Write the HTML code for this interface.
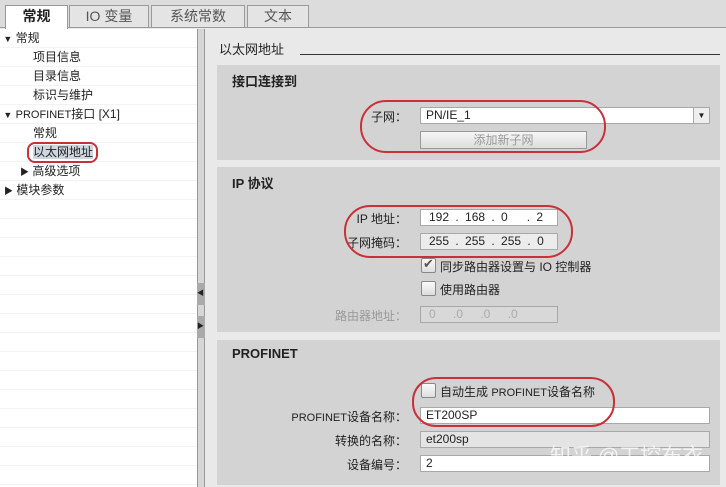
<!DOCTYPE html><html><head><meta charset="utf-8"><style>
*{margin:0;padding:0;box-sizing:border-box}
body{width:726px;height:487px;overflow:hidden;background:#e9e9e9;font-family:"Liberation Sans","Noto Sans CJK SC",sans-serif;font-size:12px;color:#222;position:relative}
.a{position:absolute}
.tab{position:absolute;top:5px;height:22px;border:1px solid #9a9a9a;border-bottom:none;background:#e4e4e4;font-size:14px;color:#555;text-align:center;line-height:21px}
.row{position:absolute;left:0;width:197px;height:19px;border-bottom:1px solid #f3f3f3;line-height:18px;font-size:12px}
.sec{position:absolute;left:217px;width:503px;background:#d3d3d3}
.h{position:absolute;left:15px;font-weight:bold;font-size:13px}
.lbl{position:absolute;text-align:right;width:120px;font-size:12px}
.box{position:absolute;background:#fff;border:1px solid #a8a8a8;height:17px;line-height:15px;padding-left:5px;font-size:12px}
.cb{position:absolute;width:15px;height:15px;border:1px solid #888;background:linear-gradient(#fafafa,#ddd);border-radius:2px}
.ell{position:absolute;border:2px solid #c8303a}
</style></head><body>
<div class="a" style="left:0;top:0;width:726px;height:28px;background:#dcdcdc;border-bottom:1px solid #9a9a9a"></div>
<div class="tab" style="left:5px;width:63px;background:#fff;font-weight:bold;color:#222;height:24px">常规</div>
<div class="tab" style="left:69px;width:80px">IO 变量</div>
<div class="tab" style="left:151px;width:94px">系统常数</div>
<div class="tab" style="left:247px;width:62px">文本</div>
<div class="a" style="left:0;top:29px;width:197px;height:458px;background:#fff"></div>
<div class="row" style="top:29px">&nbsp;<span style="font-size:9px">▼</span> 常规</div>
<div class="row" style="top:48px;padding-left:33px">项目信息</div>
<div class="row" style="top:67px;padding-left:33px">目录信息</div>
<div class="row" style="top:86px;padding-left:33px">标识与维护</div>
<div class="row" style="top:105px">&nbsp;<span style="font-size:9px">▼</span> <span style="font-size:11px">PROFINET</span>接口 [X1]</div>
<div class="row" style="top:124px;padding-left:33px">常规</div>
<div class="row" style="top:143px;padding-left:33px"><span style="background:#cfd6e0">以太网地址</span></div>
<div class="row" style="top:162px;padding-left:20px"><span style="font-size:9px">▶</span> 高级选项</div>
<div class="row" style="top:181px;padding-left:4px"><span style="font-size:9px">▶</span> 模块参数</div>
<div class="row" style="top:200px"></div><div class="row" style="top:219px"></div><div class="row" style="top:238px"></div><div class="row" style="top:257px"></div><div class="row" style="top:276px"></div><div class="row" style="top:295px"></div><div class="row" style="top:314px"></div><div class="row" style="top:333px"></div><div class="row" style="top:352px"></div><div class="row" style="top:371px"></div><div class="row" style="top:390px"></div><div class="row" style="top:409px"></div><div class="row" style="top:428px"></div><div class="row" style="top:447px"></div><div class="row" style="top:466px"></div>
<div class="ell" style="left:27px;top:142px;width:71px;height:21px;border-radius:8px"></div>
<div class="a" style="left:197px;top:29px;width:8px;height:458px;background:#d6d6d6;border-left:1px solid #999;border-right:1px solid #999"></div>
<div class="a" style="left:197px;top:283px;width:8px;height:22px;background:#aaa;font-size:7px;line-height:22px">◀</div>
<div class="a" style="left:197px;top:316px;width:8px;height:22px;background:#aaa;font-size:7px;line-height:22px">▶</div>
<div class="a" style="left:219px;top:39px;font-size:13px">以太网地址</div>
<div class="a" style="left:300px;top:54px;width:420px;height:1px;background:#333"></div>
<div class="sec" style="top:65px;height:95px"><div class="h" style="top:6px">接口连接到</div></div>
<div class="lbl" style="left:287px;top:108px">子网：</div>
<div class="box" style="left:420px;top:107px;width:290px">PN/IE_1</div>
<div class="a" style="left:693px;top:108px;width:16px;height:15px;background:#eee;border-left:1px solid #aaa;font-size:8px;text-align:center;line-height:15px">▼</div>
<div class="a" style="left:420px;top:131px;width:167px;height:18px;border:1px solid #999;background:linear-gradient(#f6f6f6,#ddd);color:#999;text-align:center;line-height:16px">添加新子网</div>
<div class="ell" style="left:360px;top:100px;width:246px;height:53px;border-radius:26px"></div>
<div class="sec" style="top:167px;height:165px"><div class="h" style="top:6px">IP 协议</div></div>
<div class="lbl" style="left:287px;top:210px">IP 地址：</div>
<div class="box" style="left:420px;top:209px;width:138px;padding-left:8px;word-spacing:3px">192 . 168 . 0 &nbsp;&nbsp;. 2</div>
<div class="lbl" style="left:287px;top:234px">子网掩码：</div>
<div class="box" style="left:420px;top:233px;width:138px;padding-left:8px;background:#ececec;word-spacing:3px">255 . 255 . 255 . 0</div>
<div class="ell" style="left:344px;top:205px;width:229px;height:53px;border-radius:26px"></div>
<div class="cb" style="left:421px;top:258px"><span style="position:absolute;left:1px;top:-3px;font-size:13px;color:#555">✔</span></div>
<div class="a" style="left:440px;top:258px">同步路由器设置与 IO 控制器</div>
<div class="cb" style="left:421px;top:281px"></div>
<div class="a" style="left:440px;top:281px">使用路由器</div>
<div class="lbl" style="left:287px;top:307px;color:#999">路由器地址：</div>
<div class="box" style="left:420px;top:306px;width:138px;background:#d8d8d8;color:#aaa;padding-left:8px;word-spacing:14px">0 .0 .0 .0</div>
<div class="sec" style="top:340px;height:145px"><div class="h" style="top:6px">PROFINET</div></div>
<div class="cb" style="left:421px;top:383px"></div>
<div class="a" style="left:440px;top:383px">自动生成 <span style="font-size:11px">PROFINET</span>设备名称</div>
<div class="lbl" style="left:247px;top:408px;width:160px"><span style="font-size:11px">PROFINET</span>设备名称：</div>
<div class="box" style="left:420px;top:407px;width:290px">ET200SP</div>
<div class="ell" style="left:412px;top:377px;width:203px;height:50px;border-radius:24px"></div>
<div class="lbl" style="left:287px;top:432px">转换的名称：</div>
<div class="box" style="left:420px;top:431px;width:290px;background:#e4e4e4">et200sp</div>
<div class="lbl" style="left:287px;top:456px">设备编号：</div>
<div class="box" style="left:420px;top:455px;width:290px">2</div>
<div class="a" style="left:550px;top:440px;font-size:21px;color:rgba(255,255,255,.75)">知乎 @工控布衣</div>
</body></html>
